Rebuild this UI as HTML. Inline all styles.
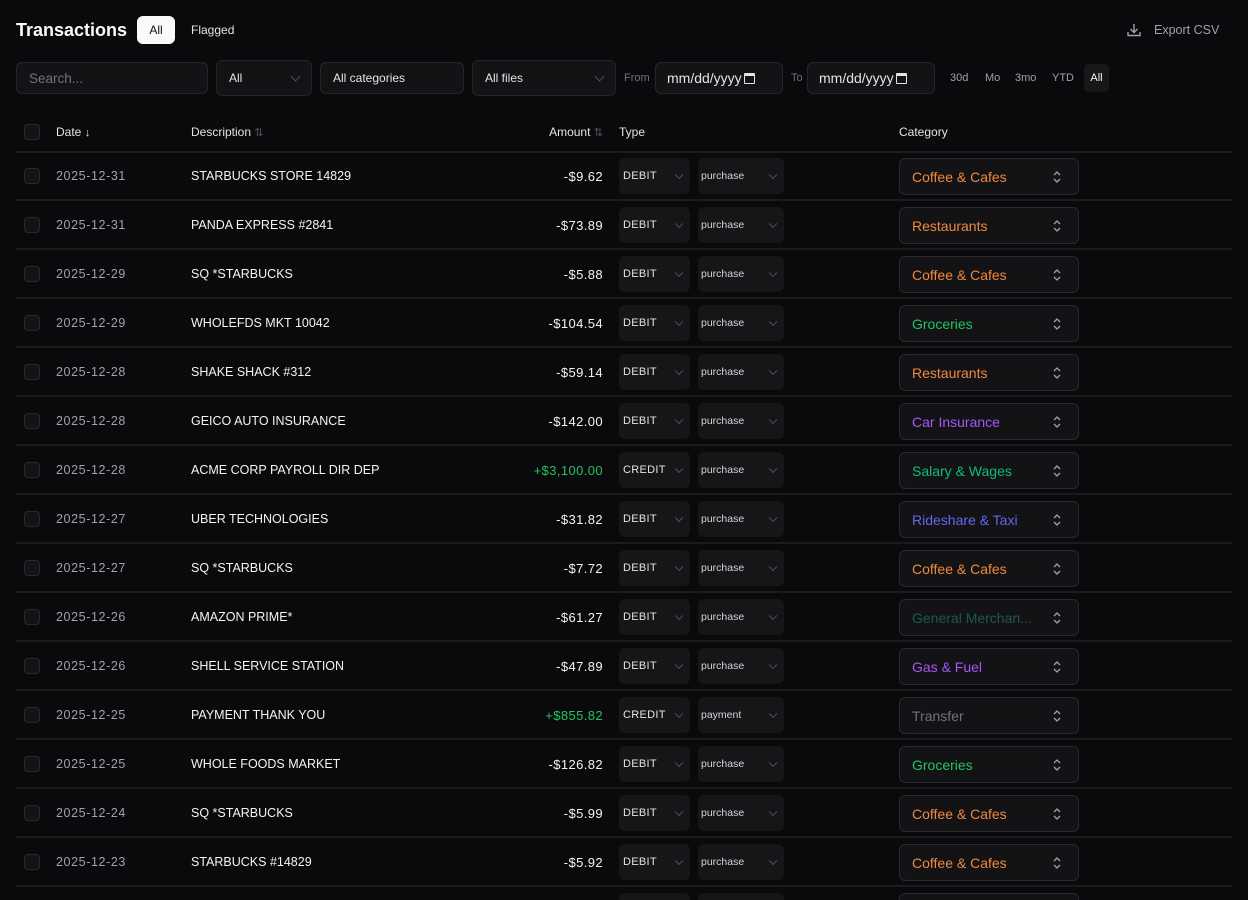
<!DOCTYPE html>
<html style="height:900px;overflow:hidden"><head><style>
*{box-sizing:border-box;margin:0;padding:0}
body{width:1248px;height:900px;overflow:hidden;background:#0a0a0c;color:#e4e4e7;font-family:"Liberation Sans",sans-serif;font-size:12.5px;position:relative}
.a{position:absolute}
.box{position:absolute;background:#131316;border:1px solid #26262a;border-radius:6px;display:flex;align-items:center;padding-left:12px;color:#e4e4e7}
.chev{position:absolute;right:12px;top:50%;width:7px;height:7px;border-right:1.3px solid #71717a;border-bottom:1.3px solid #71717a;transform:translateY(-70%) rotate(45deg)}
.row{position:absolute;left:16px;width:1216px;height:49px;border-bottom:2px solid #1c1c1f}
.cb{position:absolute;left:8px;top:16px;width:16px;height:16px;border:1px solid #2a2a2e;border-radius:4px;background:#141417}
.dt{position:absolute;left:40px;top:17px;color:#a1a1aa;letter-spacing:.6px}
.ds{position:absolute;left:175px;top:17px;color:#f4f4f5}
.am{position:absolute;right:629px;top:17px;color:#f4f4f5;letter-spacing:.4px;font-size:13px}
.ty{position:absolute;left:603px;top:6px;width:71px;height:36px;background:#161619;border-radius:6px;font-size:11px;padding:12px 0 0 4px;color:#e4e4e7;letter-spacing:.3px}
.pu{position:absolute;left:682px;top:6px;width:86px;height:36px;background:#161619;border-radius:6px;font-size:10.5px;padding:12px 0 0 3px;color:#d4d4d8}
.ty .chev,.pu .chev{right:8px;width:6px;height:6px;border-color:#52525b}
.ca{position:absolute;left:883px;top:6px;width:180px;height:37px;background:#131316;border:1px solid #2a2a2e;border-radius:6px;font-size:14px;padding:10px 0 0 12px}
.ud{position:absolute;right:16px;top:11px}
</style></head><body>
<div class="a" style="left:16px;top:20px;font-size:18px;font-weight:bold;color:#fafafa">Transactions</div>
<div class="a" style="left:137px;top:16px;width:38px;height:28px;background:#fafafa;border-radius:6px;color:#111;font-size:12px;text-align:center;line-height:28px">All</div>
<div class="a" style="left:191px;top:23px;font-size:12px;color:#e4e4e7">Flagged</div>
<svg class="a" style="left:1126px;top:22px" width="16" height="16" viewBox="0 0 16 16" fill="none" stroke="#a1a1aa" stroke-width="1.4"><path d="M8 2v8M4.5 7l3.5 3.5L11.5 7M2 10v3.5h12V10"/></svg>
<div class="a" style="left:1154px;top:23px;font-size:12.5px;color:#a1a1aa">Export CSV</div>

<div class="box" style="left:16px;top:62px;width:192px;height:32px;color:#71717a;font-size:13.5px">Search...</div>
<div class="box" style="left:216px;top:60px;width:96px;height:36px;font-size:12px">All<span class="chev" style="border-color:#52525b"></span></div>
<div class="box" style="left:320px;top:62px;width:144px;height:32px;font-size:12px">All categories</div>
<div class="box" style="left:472px;top:60px;width:144px;height:36px;font-size:12px">All files<span class="chev" style="border-color:#52525b"></span></div>
<div class="a" style="left:624px;top:72px;font-size:11px;color:#71717a">From</div>
<div class="box" style="left:655px;top:62px;width:128px;height:32px;font-size:14px;padding-left:11px">mm/dd/yyyy<span style="display:inline-block;width:11px;height:11px;border:1.5px solid #e4e4e7;border-top-width:3px;border-radius:1px;margin-left:2px"></span></div>
<div class="a" style="left:791px;top:72px;font-size:11px;color:#71717a">To</div>
<div class="box" style="left:807px;top:62px;width:128px;height:32px;font-size:14px;padding-left:11px">mm/dd/yyyy<span style="display:inline-block;width:11px;height:11px;border:1.5px solid #e4e4e7;border-top-width:3px;border-radius:1px;margin-left:2px"></span></div>
<div class="a" style="left:950px;top:72px;font-size:11px;color:#a1a1aa">30d</div>
<div class="a" style="left:985px;top:72px;font-size:11px;color:#a1a1aa">Mo</div>
<div class="a" style="left:1015px;top:72px;font-size:11px;color:#a1a1aa">3mo</div>
<div class="a" style="left:1052px;top:72px;font-size:11px;color:#a1a1aa">YTD</div>
<div class="a" style="left:1084px;top:64px;width:25px;height:28px;background:#18181b;border-radius:5px;font-size:11px;color:#fafafa;text-align:center;line-height:28px">All</div>

<div class="row" style="top:112px;height:41px">
<div class="cb" style="top:12px"></div>
<div class="a" style="left:40px;top:13px;font-size:12px;color:#e4e4e7">Date <span style="font-size:11px">↓</span></div>
<div class="a" style="left:175px;top:13px;font-size:12px;color:#e4e4e7">Description <span style="color:#52525b;font-size:11px">⇅</span></div>
<div class="a" style="right:629px;top:13px;font-size:12px;color:#e4e4e7">Amount <span style="color:#52525b;font-size:11px">⇅</span></div>
<div class="a" style="left:603px;top:13px;font-size:12px;color:#e4e4e7">Type</div>
<div class="a" style="left:883px;top:13px;font-size:12px;color:#e4e4e7">Category</div>
</div>

<div id="rows"></div>
<script>
const O='#f0883e';
const d=[
['2025-12-31','STARBUCKS STORE 14829','-$9.62','DEBIT','purchase','Coffee & Cafes',O],
['2025-12-31','PANDA EXPRESS #2841','-$73.89','DEBIT','purchase','Restaurants',O],
['2025-12-29','SQ *STARBUCKS','-$5.88','DEBIT','purchase','Coffee & Cafes',O],
['2025-12-29','WHOLEFDS MKT 10042','-$104.54','DEBIT','purchase','Groceries','#22c55e'],
['2025-12-28','SHAKE SHACK #312','-$59.14','DEBIT','purchase','Restaurants',O],
['2025-12-28','GEICO AUTO INSURANCE','-$142.00','DEBIT','purchase','Car Insurance','#a855f7'],
['2025-12-28','ACME CORP PAYROLL DIR DEP','+$3,100.00','CREDIT','purchase','Salary & Wages','#10b981'],
['2025-12-27','UBER TECHNOLOGIES','-$31.82','DEBIT','purchase','Rideshare & Taxi','#6366f1'],
['2025-12-27','SQ *STARBUCKS','-$7.72','DEBIT','purchase','Coffee & Cafes',O],
['2025-12-26','AMAZON PRIME*','-$61.27','DEBIT','purchase','General Merchan...','#1e5a4c'],
['2025-12-26','SHELL SERVICE STATION','-$47.89','DEBIT','purchase','Gas & Fuel','#a855f7'],
['2025-12-25','PAYMENT THANK YOU','+$855.82','CREDIT','payment','Transfer','#71717a'],
['2025-12-25','WHOLE FOODS MARKET','-$126.82','DEBIT','purchase','Groceries','#22c55e'],
['2025-12-24','SQ *STARBUCKS','-$5.99','DEBIT','purchase','Coffee & Cafes',O],
['2025-12-23','STARBUCKS #14829','-$5.92','DEBIT','purchase','Coffee & Cafes',O],
['','','','','','','#000']];
const ud='<svg class="ud" width="10" height="14" viewBox="0 0 10 14" fill="none" stroke="#a1a1aa" stroke-width="1.3"><path d="M2 5l3-3 3 3M2 9l3 3 3-3"/></svg>';
let h='';
d.forEach((r,i)=>{const t=152+i*49;const full=r[0]!=='';
h+=`<div class="row" style="top:${t}px">${full?`<div class="cb"></div><div class="dt">${r[0]}</div><div class="ds">${r[1]}</div><div class="am" style="${r[2][0]=='+'?'color:#22c55e':''}">${r[2]}</div>`:''}<div class="ty">${r[3]}<span class="chev"></span></div><div class="pu">${r[4]}<span class="chev"></span></div><div class="ca" style="color:${r[6]}">${r[5]}${full?ud:''}</div></div>`;});
document.getElementById('rows').innerHTML=h;
</script>
</body></html>
